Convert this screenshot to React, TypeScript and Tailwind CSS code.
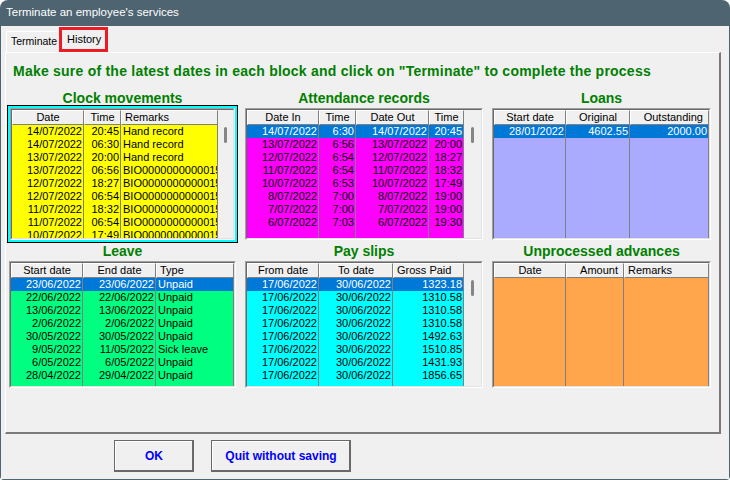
type Col = {
  label: string
  w: string
  align: 'left' | 'right'
  head: 'left' | 'center' | 'right'
}

type GridProps = {
  cols: Col[]
  rows: string[][]
  bg: string
  selected?: number
  scroll?: boolean
  bodyH: string
  outer?: string
}

const headAlign = {
  left: 'text-left pl-[3px]',
  center: 'text-center',
  right: 'text-right pr-[5px]',
}

function DataGrid({ cols, rows, bg, selected = -1, scroll = false, bodyH, outer = '' }: GridProps) {
  return (
    <div className={`border border-t-[#a0a0a0] border-l-[#a0a0a0] border-b-white border-r-white ${outer}`}>
      <div className="flex border border-t-[#696969] border-l-[#696969] border-b-[#e3e3e3] border-r-[#e3e3e3] bg-[#f0f0f0]">
        <div className="flex flex-col">
          {/* header */}
          <div className="flex h-[15px]">
            {cols.map((c, i) => (
              <div
                key={i}
                className={`${c.w} ${headAlign[c.head]} h-[15px] leading-[13px] border border-t-white border-l-white border-r-[#808080] border-b-[#808080] bg-[#f0f0f0] text-black whitespace-nowrap overflow-hidden`}
              >
                {c.label}
              </div>
            ))}
          </div>
          {/* body */}
          <div className={`flex ${bodyH}`}>
            {cols.map((c, ci) => (
              <div key={ci} className={`${c.w} ${bg} flex flex-col border-r border-[#808080] overflow-hidden`}>
                {rows.map((r, ri) => (
                  <div
                    key={ri}
                    className={`h-[13px] shrink-0 leading-[13px] whitespace-nowrap overflow-hidden ${
                      c.align === 'right' ? 'text-right pr-[1px]' : 'text-left pl-[2px]'
                    } ${ri === selected ? 'bg-[#0078d7] text-white' : 'text-black'}`}
                  >
                    {r[ci]}
                  </div>
                ))}
              </div>
            ))}
          </div>
        </div>
        {scroll && (
          <div className="flex-1 flex justify-center pt-[17px] bg-[#f0f0f0]">
            <div className="w-[3px] h-[16px] rounded-full bg-[#858585]" />
          </div>
        )}
      </div>
    </div>
  )
}

function Title({ children }: { children: React.ReactNode }) {
  return (
    <div className="h-[16px] leading-[16px] mb-[2px] text-center text-[14px] font-bold text-[#008000] whitespace-nowrap">
      {children}
    </div>
  )
}

const bio = 'BIO000000000001534789'

const clockCols: Col[] = [
  { label: 'Date', w: 'w-[72px]', align: 'right', head: 'center' },
  { label: 'Time', w: 'w-[37px]', align: 'right', head: 'center' },
  { label: 'Remarks', w: 'w-[97px]', align: 'left', head: 'left' },
]
const clockRows = [
  ['14/07/2022', '20:45', 'Hand record'],
  ['14/07/2022', '06:30', 'Hand record'],
  ['13/07/2022', '20:00', 'Hand record'],
  ['13/07/2022', '06:56', bio],
  ['12/07/2022', '18:27', bio],
  ['12/07/2022', '06:54', bio],
  ['11/07/2022', '18:32', bio],
  ['11/07/2022', '06:54', bio],
  ['10/07/2022', '17:49', bio],
]

const attCols: Col[] = [
  { label: 'Date In', w: 'w-[72px]', align: 'right', head: 'center' },
  { label: 'Time', w: 'w-[37px]', align: 'right', head: 'center' },
  { label: 'Date Out', w: 'w-[73px]', align: 'right', head: 'center' },
  { label: 'Time', w: 'w-[35px]', align: 'right', head: 'center' },
]
const attRows = [
  ['14/07/2022', '6:30', '14/07/2022', '20:45'],
  ['13/07/2022', '6:56', '13/07/2022', '20:00'],
  ['12/07/2022', '6:54', '12/07/2022', '18:27'],
  ['11/07/2022', '6:54', '11/07/2022', '18:32'],
  ['10/07/2022', '6:53', '10/07/2022', '17:49'],
  ['8/07/2022', '7:00', '8/07/2022', '19:00'],
  ['7/07/2022', '7:00', '7/07/2022', '19:00'],
  ['6/07/2022', '7:03', '6/07/2022', '19:30'],
]

const loanCols: Col[] = [
  { label: 'Start date', w: 'w-[72px]', align: 'right', head: 'center' },
  { label: 'Original', w: 'w-[64px]', align: 'right', head: 'center' },
  { label: 'Outstanding', w: 'w-[79px]', align: 'right', head: 'right' },
]
const loanRows = [['28/01/2022', '4602.55', '2000.00']]

const leaveCols: Col[] = [
  { label: 'Start date', w: 'w-[72px]', align: 'right', head: 'center' },
  { label: 'End date', w: 'w-[73px]', align: 'right', head: 'center' },
  { label: 'Type', w: 'w-[78px]', align: 'left', head: 'left' },
]
const leaveRows = [
  ['23/06/2022', '23/06/2022', 'Unpaid'],
  ['22/06/2022', '22/06/2022', 'Unpaid'],
  ['13/06/2022', '13/06/2022', 'Unpaid'],
  ['2/06/2022', '2/06/2022', 'Unpaid'],
  ['30/05/2022', '30/05/2022', 'Unpaid'],
  ['9/05/2022', '11/05/2022', 'Sick leave'],
  ['6/05/2022', '6/05/2022', 'Unpaid'],
  ['28/04/2022', '29/04/2022', 'Unpaid'],
]

const payCols: Col[] = [
  { label: 'From date', w: 'w-[72px]', align: 'right', head: 'center' },
  { label: 'To date', w: 'w-[74px]', align: 'right', head: 'center' },
  { label: 'Gross Paid', w: 'w-[71px]', align: 'right', head: 'left' },
]
const payRows = ['1323.18', '1310.58', '1310.58', '1310.58', '1492.63', '1510.85', '1431.93', '1856.65'].map(g => [
  '17/06/2022',
  '30/06/2022',
  g,
])

const advCols: Col[] = [
  { label: 'Date', w: 'w-[72px]', align: 'right', head: 'center' },
  { label: 'Amount', w: 'w-[58px]', align: 'right', head: 'right' },
  { label: 'Remarks', w: 'w-[85px]', align: 'left', head: 'left' },
]

export default function App() {
  return (
    <div className="w-[730px] h-[480px] bg-white font-['Liberation_Sans',Arial,sans-serif] text-[11px] text-black">
      <div className="w-[730px] h-[480px] flex flex-col rounded-t-[8px] rounded-b-[4px] overflow-hidden bg-[#4e6471]">
        {/* Title bar */}
        <div className="h-[26px] shrink-0 flex items-center pl-[6px] text-[11.5px] text-white">
          Terminate an employee's services
        </div>

        {/* Window body */}
        <div className="flex-1 mx-[1px] mb-[1px] bg-[#f0f0f0] flex flex-col">
          {/* Tabs */}
          <div className="h-[26px] flex items-end pl-[5px]">
            <div className="w-[53px] h-[21px] border-t border-l border-white pl-[4px] leading-[18px] text-[10.5px] whitespace-nowrap">
              Terminate
            </div>
            <div className="w-[49px] h-[25px] border-[3px] border-[#ed1c24] pl-[5px] leading-[18px] whitespace-nowrap">
              History
            </div>
          </div>

          {/* Tab panel */}
          <div className="ml-[4px] w-[716px] h-[382px] border-t border-l border-white border-r-2 border-b-2 border-r-[#7a7a7a] border-b-[#7a7a7a] pt-[8px] pl-[1px]">
            <div className="h-[20px] leading-[20px] pl-[6px] text-[14px] tracking-[0.23px] font-bold text-[#008000] whitespace-nowrap">
              Make sure of the latest dates in each block and click on "Terminate" to complete the process
            </div>

            <div className="flex mt-[9px]">
              {/* column 1 */}
              <div className="w-[231px] flex flex-col items-center">
                <Title>Clock movements</Title>
                <DataGrid
                  cols={clockCols}
                  rows={clockRows}
                  bg="bg-[#ffff00]"
                  scroll
                  bodyH="h-[113px]"
                  outer="w-[225px] shadow-[0_0_0_2px_#00ffff,0_0_0_3px_#000000]"
                />
                <div className="mt-[3px]" />
                <Title>Leave</Title>
                <DataGrid cols={leaveCols} rows={leaveRows} bg="bg-[#00ff80]" selected={0} bodyH="h-[108px]" outer="w-[227px]" />
              </div>

              {/* column 2 */}
              <div className="ml-[7px] w-[238px] flex flex-col">
                <Title>Attendance records</Title>
                <DataGrid cols={attCols} rows={attRows} bg="bg-[#ff00ff]" selected={0} scroll bodyH="h-[113px]" outer="w-[238px]" />
                <div className="mt-[3px]" />
                <Title>Pay slips</Title>
                <DataGrid cols={payCols} rows={payRows} bg="bg-[#00ffff]" selected={0} scroll bodyH="h-[108px]" outer="w-[238px]" />
              </div>

              {/* column 3 */}
              <div className="ml-[9px] w-[219px] flex flex-col">
                <Title>Loans</Title>
                <DataGrid cols={loanCols} rows={loanRows} bg="bg-[#aaaaff]" selected={0} bodyH="h-[113px]" outer="w-[219px]" />
                <div className="mt-[3px]" />
                <Title>Unprocessed advances</Title>
                <DataGrid cols={advCols} rows={[]} bg="bg-[#ffa64d]" bodyH="h-[108px]" outer="w-[219px]" />
              </div>
            </div>
          </div>

          {/* Buttons */}
          <div className="flex mt-[6px] pl-[113px] gap-[17px]">
            <button className="w-[80px] h-[32px] border border-[#696969] border-r-2 border-b-2 bg-[#f0f0f0]">
              <div className="h-full border-t border-l border-white flex items-center justify-center text-[12px] font-bold text-[#0000ff]">
                OK
              </div>
            </button>
            <button className="w-[140px] h-[32px] border border-[#696969] border-r-2 border-b-2 bg-[#f0f0f0]">
              <div className="h-full border-t border-l border-white flex items-center justify-center text-[12px] font-bold text-[#0000ff]">
                Quit without saving
              </div>
            </button>
          </div>
        </div>
      </div>
    </div>
  )
}
